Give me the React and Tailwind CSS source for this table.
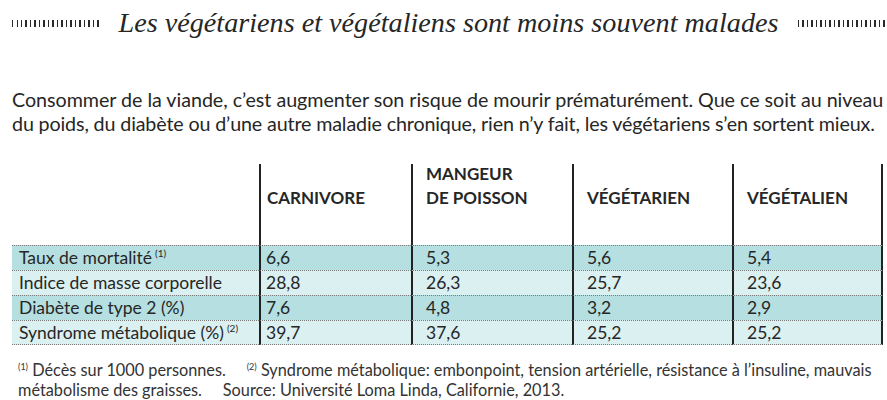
const rows = [
  { label: "Taux de mortalité", note: "(1)", values: ["6,6", "5,3", "5,6", "5,4"], dark: true },
  { label: "Indice de masse corporelle", values: ["28,8", "26,3", "25,7", "23,6"], dark: false },
  { label: "Diabète de type 2 (%)", values: ["7,6", "4,8", "3,2", "2,9"], dark: true },
  { label: "Syndrome métabolique (%)", note: "(2)", values: ["39,7", "37,6", "25,2", "25,2"], dark: false },
];

const Ticks = () => (
  <div className="flex-1 h-[7px] bg-[repeating-linear-gradient(90deg,#2a2a2a_0_1.3px,transparent_1.3px_4.5px)]" />
);

export default function App() {
  return (
    <div className="w-[887px] h-[400px] overflow-hidden bg-white text-[#262626] font-['Lato',sans-serif]">
      {/* Title */}
      <div className="flex items-center gap-5 pl-3 pr-[2px] pt-[7px] h-[40px]">
        <Ticks />
        <h1 className="font-['Liberation_Serif',serif] italic text-[28.2px] leading-none whitespace-nowrap">
          Les végétariens et végétaliens sont moins souvent malades
        </h1>
        <Ticks />
      </div>

      {/* Intro */}
      <p className="pl-3 pt-[48px] text-[19.7px] leading-[24px] whitespace-nowrap">
        <span className="tracking-[-0.03px]">
          Consommer de la viande, c’est augmenter son risque de mourir prématurément. Que ce soit au niveau
        </span>
        <br />
        <span className="tracking-[-0.14px]">
          du poids, du diabète ou d’une autre maladie chronique, rien n’y fait, les végétariens s’en sortent mieux.
        </span>
      </p>

      {/* Table */}
      <div className="ml-3 mt-[28px] grid grid-cols-[247px_152px_161px_160px_151px] text-[17.5px] leading-[24px]">
        <div className="h-[81px]" />
        {["CARNIVORE", "MANGEUR\nDE POISSON", "VÉGÉTARIEN", "VÉGÉTALIEN"].map((h, i) => (
          <div
            key={h}
            className={`h-[81px] flex items-end pb-[35px] border-l-2 border-[#222] font-bold text-[17px] leading-[24px] whitespace-pre-line ${i === 0 ? "pl-[6px]" : "pl-[13px]"} ${i === 3 ? "border-r-2" : ""}`}
          >
            {h}
          </div>
        ))}

        {rows.map((r, ri) => (
          <div key={r.label} className="contents">
            <div
              className={`h-[25px] pl-[7px] border-t border-dotted border-[#7a7a7a] whitespace-nowrap ${r.dark ? "bg-[#b5dfe0]" : "bg-[#dbf0f1]"} ${ri === rows.length - 1 ? "border-b" : ""}`}
            >
              {r.label}
              {r.note && <sup className="text-[10px] ml-[3px] relative -top-[7px]">{r.note}</sup>}
            </div>
            {r.values.map((v, vi) => (
              <div
                key={vi}
                className={`h-[25px] border-t border-dotted border-t-[#7a7a7a] border-l-2 border-l-[#222] ${vi === 0 ? "pl-[5px]" : "pl-[13px]"} ${vi === 3 ? "border-r-2 border-r-[#222]" : ""} ${r.dark ? "bg-[#b5dfe0]" : "bg-[#dbf0f1]"} ${ri === rows.length - 1 ? "border-b border-b-[#7a7a7a]" : ""}`}
                style={{ borderLeftStyle: "solid", borderRightStyle: "solid" }}
              >
                {v}
              </div>
            ))}
          </div>
        ))}
      </div>

      {/* Footnotes */}
      <div className="pl-[18px] pt-[15px] text-[16.3px] leading-[20px] text-[#333] whitespace-pre">
        <sup className="text-[9px] relative -top-[6px]">(1)</sup> Décès sur 1000 personnes.     <sup className="text-[9px] relative -top-[6px]">(2)</sup> Syndrome métabolique: embonpoint, tension artérielle, résistance à l’insuline, mauvais
        <br />
        métabolisme des graisses.     Source: Université Loma Linda, Californie, 2013.
      </div>
    </div>
  );
}
